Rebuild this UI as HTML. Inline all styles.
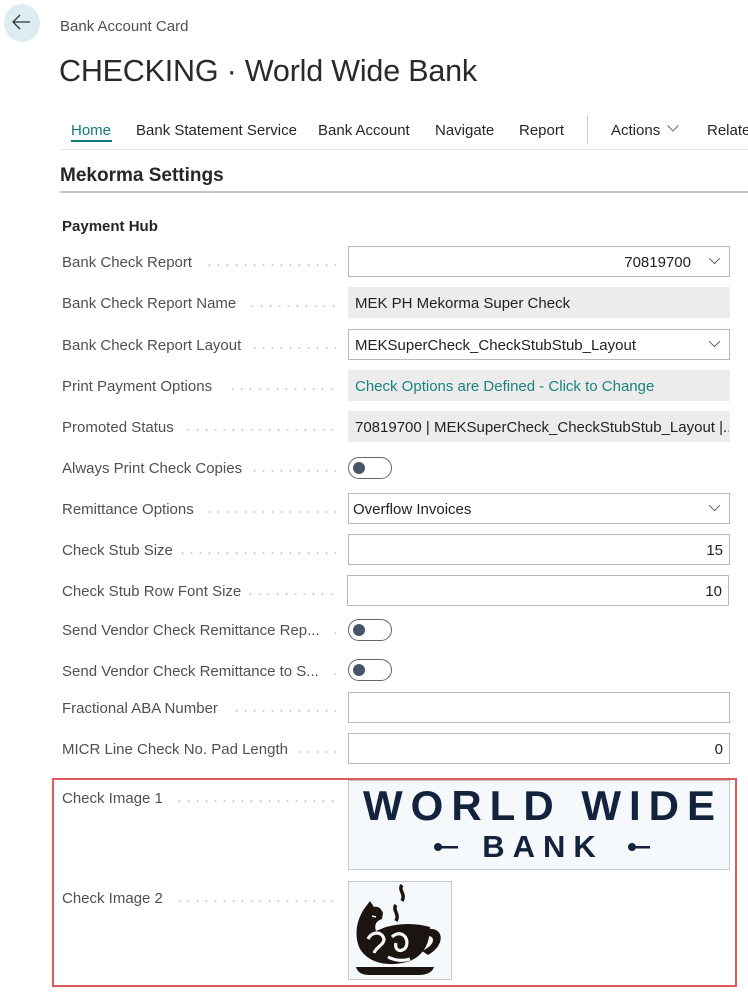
<!DOCTYPE html>
<html><head><meta charset="utf-8">
<style>
*{box-sizing:border-box;margin:0;padding:0}
body{width:748px;height:1000px;background:#fff;font-family:"Liberation Sans",sans-serif;color:#212121;position:relative;overflow:hidden}
.a{position:absolute;white-space:nowrap}
.lbl{position:absolute;left:62px;font-size:15px;color:#505050;line-height:20px}
.dots{position:absolute;left:0;width:340px;height:2px;background-image:radial-gradient(circle,#c4c4c4 0.7px,transparent 1.1px);background-size:9px 2px;background-repeat:repeat-x}
.box{position:absolute;left:348px;width:382px;height:31px;border:1px solid #b8b8b8;background:#fff;font-size:15px;line-height:31px;padding:0 6px;color:#222;white-space:nowrap;overflow:hidden}
.ro{background:#ececec;border-color:#ececec}
.r{text-align:right}
.chev{position:absolute;right:10px;width:9px;height:9px;border-right:1px solid #555;border-bottom:1px solid #555;transform:rotate(45deg) scale(0.9,0.9);top:7px}
.tg{position:absolute;left:348px;width:44px;height:22px;border:1px solid #666;border-radius:11px}
.tg::after{content:"";position:absolute;left:4px;top:4px;width:12px;height:12px;border-radius:50%;background:#4a5468}
</style></head><body>
<div class="a" style="left:4px;top:4px;width:36px;height:38px;border-radius:50%;background:#dcecef"></div>
<svg class="a" style="left:10px;top:12px" width="22" height="20" viewBox="0 0 22 20"><path d="M3 10H20M10 3L3 10L10 17" fill="none" stroke="#333" stroke-width="1.3"/></svg>
<div class="a" style="left:60px;top:18px;font-size:15px;color:#505050">Bank Account Card</div>
<div class="a" style="left:59px;top:54px;font-size:30.5px;color:#2a2a2a;letter-spacing:-0.2px">CHECKING · World Wide Bank</div>
<div class="a" style="left:71px;top:122px;font-size:15px;color:#0e7c78">Home</div>
<div class="a" style="left:71px;top:140px;width:41px;height:2px;background:#0e7c78"></div>
<div class="a" style="left:136px;top:122px;font-size:15px;color:#262626">Bank Statement Service</div>
<div class="a" style="left:318px;top:122px;font-size:15px;color:#262626">Bank Account</div>
<div class="a" style="left:435px;top:122px;font-size:15px;color:#262626">Navigate</div>
<div class="a" style="left:519px;top:122px;font-size:15px;color:#262626">Report</div>
<div class="a" style="left:587px;top:116px;width:1px;height:28px;background:#ccc"></div>
<div class="a" style="left:611px;top:122px;font-size:15px;color:#262626">Actions</div>
<div class="a" style="left:669px;top:122px;width:8px;height:8px;border-right:1px solid #666;border-bottom:1px solid #666;transform:rotate(45deg)"></div>
<div class="a" style="left:707px;top:122px;font-size:15px;color:#262626">Relate</div>
<div class="a" style="left:60px;top:149px;width:688px;height:1px;background:#e6e6e6"></div>
<div class="a" style="left:60px;top:165px;font-size:19px;font-weight:bold;color:#262626">Mekorma Settings</div>
<div class="a" style="left:60px;top:191px;width:688px;height:2px;background:#c4c4c4"></div>
<div class="a" style="left:62px;top:218px;font-size:15px;font-weight:bold;color:#262626">Payment Hub</div>

<div class="lbl" style="top:253px">Bank Check Report</div><div class="dots" style="left:205px;width:135px;top:264px"></div>
<div class="box r" style="top:246px;padding-right:38px">70819700<span class="chev"></span></div>
<div class="lbl" style="top:294px">Bank Check Report Name</div><div class="dots" style="left:248px;width:92px;top:305px"></div>
<div class="box ro" style="top:287px">MEK PH Mekorma Super Check</div>
<div class="lbl" style="top:336px">Bank Check Report Layout</div><div class="dots" style="left:250px;width:90px;top:347px"></div>
<div class="box" style="top:329px">MEKSuperCheck_CheckStubStub_Layout<span class="chev"></span></div>
<div class="lbl" style="top:377px">Print Payment Options</div><div class="dots" style="left:228px;width:112px;top:388px"></div>
<div class="box ro" style="top:370px;color:#19837e">Check Options are Defined - Click to Change</div>
<div class="lbl" style="top:418px">Promoted Status</div><div class="dots" style="left:184px;width:156px;top:429px"></div>
<div class="box ro" style="top:411px">70819700 | MEKSuperCheck_CheckStubStub_Layout |...</div>
<div class="lbl" style="top:459px">Always Print Check Copies</div><div class="dots" style="left:250px;width:90px;top:470px"></div>
<div class="tg" style="top:457px"></div>
<div class="lbl" style="top:500px">Remittance Options</div><div class="dots" style="left:205px;width:135px;top:511px"></div>
<div class="box" style="top:493px;padding-left:4px">Overflow Invoices<span class="chev"></span></div>
<div class="lbl" style="top:541px">Check Stub Size</div><div class="dots" style="left:178px;width:162px;top:552px"></div>
<div class="box r" style="top:534px">15</div>
<div class="lbl" style="top:582px">Check Stub Row Font Size</div><div class="dots" style="left:246px;width:94px;top:593px"></div>
<div class="box r" style="top:575px;left:347px">10</div>
<div class="lbl" style="top:621px">Send Vendor Check Remittance Rep...</div><div class="dots" style="left:331px;width:9px;top:632px"></div>
<div class="tg" style="top:619px"></div>
<div class="lbl" style="top:662px">Send Vendor Check Remittance to S...</div><div class="dots" style="left:331px;width:9px;top:673px"></div>
<div class="tg" style="top:659px"></div>
<div class="lbl" style="top:699px">Fractional ABA Number</div><div class="dots" style="left:232px;width:108px;top:710px"></div>
<div class="box" style="top:692px"></div>
<div class="lbl" style="top:740px">MICR Line Check No. Pad Length</div><div class="dots" style="left:295px;width:45px;top:751px"></div>
<div class="box r" style="top:733px">0</div>

<div class="a" style="left:52px;top:778px;width:685px;height:209px;border:2px solid #dc5a5a"></div>
<div class="lbl" style="top:789px">Check Image 1</div><div class="dots" style="left:175px;width:165px;top:800px"></div>
<div class="lbl" style="top:889px">Check Image 2</div><div class="dots" style="left:175px;width:165px;top:900px"></div>
<div class="a" style="left:348px;top:780px;width:382px;height:90px;border:1px solid #c8c8c8;background:#f6f9fc"></div>
<div class="a" style="left:348px;top:783px;width:390px;text-align:center;font-size:42px;font-weight:bold;color:#13233d;letter-spacing:8px;line-height:46px">WORLD WIDE</div>
<div class="a" style="left:350px;top:828px;width:386px;text-align:center;font-size:31px;font-weight:bold;color:#13233d;letter-spacing:8px;line-height:38px">BANK</div>
<svg class="a" style="left:430px;top:840px" width="230" height="14"><circle cx="8" cy="7" r="4" fill="#13233d"/><rect x="8" y="6" width="20" height="2.5" fill="#13233d"/><circle cx="202" cy="7" r="4" fill="#13233d"/><rect x="202" y="6" width="18" height="2.5" fill="#13233d"/></svg>
<div class="a" style="left:348px;top:881px;width:104px;height:99px;border:1px solid #c8c8c8;background:#f6f9fc"></div>
<svg class="a" style="left:348px;top:881px" width="104" height="99" viewBox="0 0 104 99">
<path d="M16 28 L22 20 L26 26 C30 25 33 27 35 32 L34 38 C28 40 26 44 28 50 L38 46 C52 42 68 42 82 46 C82 62 76 74 62 80 C44 86 22 84 12 68 C6 56 8 40 16 28Z" fill="#1c1410"/>
<path d="M80 48 C96 46 98 64 80 74 L74 70 C88 64 88 54 78 55Z" fill="#1c1410"/>
<path d="M8 86 H86 C84 92 78 94 70 94 H22 C14 94 10 92 8 86Z" fill="#1c1410"/>
<path d="M54 4 C50 9 58 13 54 20 M48 24 C44 29 52 33 48 40" fill="none" stroke="#1c1410" stroke-width="3.5"/>
<path d="M20 58 C24 50 34 50 36 58 C36 64 28 66 26 72 M44 56 C52 48 62 56 58 66 C54 72 46 70 48 62 M40 76 C48 80 56 80 62 78" fill="none" stroke="#f6f9fc" stroke-width="3.2"/>
<path d="M24 35 L28 36" stroke="#f6f9fc" stroke-width="1.5"/>
</svg>
</body></html>
